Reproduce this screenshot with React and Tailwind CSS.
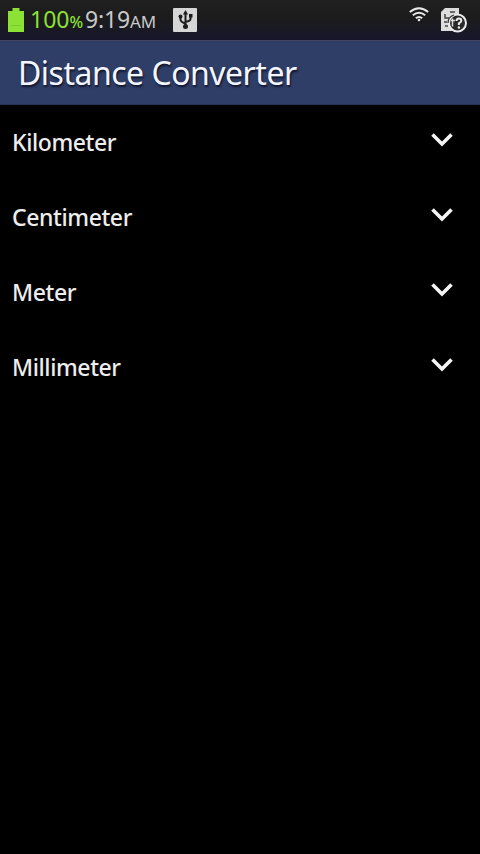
const units = ['Kilometer', 'Centimeter', 'Meter', 'Millimeter'];

const BatteryIcon = () => (
  <svg width="16" height="25" viewBox="0 0 16 25" className="shrink-0">
    <path d="M4.500 0h7v3H16v21H0V3h4.500z" fill="#8be234" />
    <path d="M3 17h10v1H3z" fill="#79c92a" />
  </svg>
);

const UsbIcon = () => (
  <svg width="24" height="24" viewBox="0 0 24 24" className="shrink-0">
    <rect width="24" height="24" rx="1" fill="#d6d6d6" />
    <g fill="none" stroke="#1c1c1c" strokeWidth="2">
      <path d="M12.500 5v14M7.500 8v3.500q0 2.500 5 4M17.500 8v3q0 2-5 3" />
    </g>
    <path d="M12.500 2l-2.500 4.500h5z" fill="#1c1c1c" />
    <circle cx="7.500" cy="8.500" r="2" fill="#1c1c1c" />
    <rect x="16" y="6" width="3.500" height="3.500" fill="#1c1c1c" />
    <circle cx="12.500" cy="18.500" r="2.500" fill="#1c1c1c" />
  </svg>
);

const WifiIcon = () => (
  <svg width="20" height="15" viewBox="0 0 20 15" fill="none" stroke="#e8e8e8" strokeWidth="2">
    <path d="M.8 5Q10-2.600 19.200 5M3.800 8.300q6.200-5 12.400 0M6.800 11.300q3.200-2.600 6.400 0" />
    <circle cx="10" cy="13" r="1.300" fill="#e8e8e8" stroke="none" />
  </svg>
);

const SimIcon = () => (
  <svg width="26" height="26" viewBox="0 0 26 26">
    <path d="M4 0h14v23H0V4z" fill="#dcdcdc" />
    <path d="M4 6v4h4M3 14h3M4 18h3M9 4h5" fill="none" stroke="#444" strokeWidth="1.500" />
    <circle cx="16.500" cy="15" r="8.500" fill="#292929" stroke="#ececec" strokeWidth="2" />
    <path d="M7 15q0-6 6-8" fill="none" stroke="#333" strokeWidth="1.300" />
    <path d="M10 12.500h4M11.500 10.500v8" stroke="#dcdcdc" strokeWidth="1.500" />
    <path
      d="M15.500 13q0-2.500 2.400-2.500t2.400 2.200q0 1.300-2.400 2.700v1.600"
      fill="none"
      stroke="#ececec"
      strokeWidth="2"
    />
    <circle cx="17.900" cy="19.500" r="1.200" fill="#ececec" />
  </svg>
);

const Chevron = () => (
  <svg width="24" height="16" viewBox="0 0 24 16" fill="none" stroke="#f5f5f5" strokeWidth="3.600">
    <path d="M2.500 2.500L12 12l9.500-9.500" />
  </svg>
);

const StatusBar = () => (
  <header className="flex h-10 items-start justify-between bg-gradient-to-b from-[#202020] via-[#1b1b1d] to-[#18162c] pl-2 pr-[13px] pt-2">
    <div className="flex items-start">
      <BatteryIcon />
      <div className="-mt-[5px] ml-[6px] flex h-8 items-baseline whitespace-nowrap text-[23px] leading-8 text-[#c9c9c9]">
        <span className="w-[55px] text-[#8be234]">
          100<span className="text-[16px] font-medium">%</span>
        </span>
        <span className="w-[88px] tracking-[-0.15px]">
          9:19<span className="text-[17px]">AM</span>
        </span>
      </div>
      <UsbIcon />
    </div>
    <div className="flex items-start gap-3">
      <div className="-mt-px">
        <WifiIcon />
      </div>
      <SimIcon />
    </div>
  </header>
);

const App = () => (
  <div className="min-h-screen w-full bg-black font-['Noto_Sans',sans-serif]">
    <StatusBar />

    {/* Title bar */}
    <div className="flex h-[65px] items-center border-b border-t border-b-[#263354] border-t-[#49445e] bg-[#2f3e66] pl-[18px]">
      <h1 className="whitespace-nowrap text-[32px] tracking-[-0.5px] text-[#f4f6ff] [text-shadow:1px_2px_2px_#10162c]">
        Distance Converter
      </h1>
    </div>

    {/* Unit pickers */}
    <ul>
      {units.map((unit) => (
        <li key={unit} className="flex h-[74.800px] items-center justify-between pl-3 pr-[26px]">
          <span className="text-[23px] font-medium tracking-[-0.4px] text-[#ededed]">{unit}</span>
          <div className="pb-1">
            <Chevron />
          </div>
        </li>
      ))}
    </ul>
  </div>
);

export default App;
